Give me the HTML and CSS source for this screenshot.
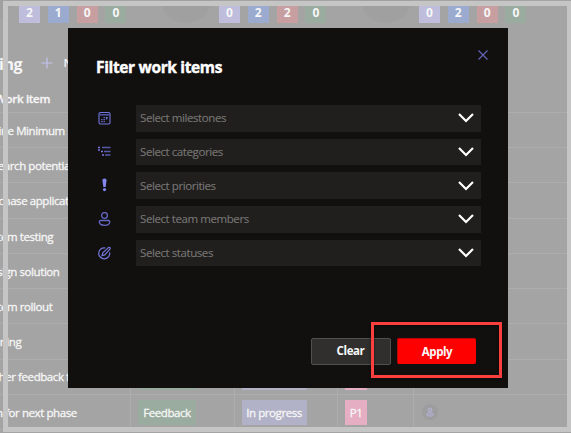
FILE: index.html
```html
<!DOCTYPE html>
<html lang="en">
<head>
<meta charset="utf-8">
<title>Filter work items</title>
<link rel="stylesheet" href="styles.css">
</head>
<body>
<div class="app">
  <div class="summary">
    <div class="group"><span class="ring">0%</span><div class="counts"><b class="c1">2</b><b class="c2">1</b><b class="c3">0</b><b class="c4">0</b></div></div>
    <div class="group"><span class="ring">0%</span><div class="counts"><b class="c1">0</b><b class="c2">2</b><b class="c3">2</b><b class="c4">0</b></div></div>
    <div class="group"><span class="ring">0%</span><div class="counts"><b class="c1">0</b><b class="c2">2</b><b class="c3">0</b><b class="c4">0</b></div></div>
  </div>
  <div class="toolbar">
    <h2><span>Planning</span></h2>
    <svg width="12" height="12" viewBox="0 0 12 12"><path d="M6 .5v11M.5 6h11" stroke="#c2c2ee" stroke-width="1.200" fill="none"/></svg>
    <span>New</span>
  </div>
  <div class="table">
    <div class="row head"><div><span>Work item</span></div></div>
    <div class="row"><div><span class="a">Define Minimum</span></div></div>
    <div class="row"><div><span class="b">Research potential</span></div></div>
    <div class="row"><div><span class="c">Purchase application</span></div></div>
    <div class="row"><div><span class="d">System testing</span></div></div>
    <div class="row"><div><span class="e">Design solution</span></div></div>
    <div class="row"><div><span class="f">System rollout</span></div></div>
    <div class="row"><div><span class="g">Training</span></div></div>
    <div class="row"><div><span class="h">Gather feedback from</span></div><div><i class="pill green">Feedback</i></div><div><i class="pill blue">In progress</i></div><div><i class="pill pink">P1</i></div><div></div></div>
    <div class="row"><div><span class="i">Plan for next phase</span></div><div><i class="pill green">Feedback</i></div><div><i class="pill blue">In progress</i></div><div><i class="pill pink">P1</i></div><div><svg class="avatar" width="16" height="16" viewBox="0 0 16 16"><circle cx="8" cy="8" r="8" fill="#9d9d9f"/><g fill="#a5a3b9" stroke="#b6b2cf"><circle cx="8" cy="6" r="2"/><rect x="4.8" y="9" width="6.4" height="3" rx="1.5"/></g></svg></div></div>
  </div>
</div>
<div class="frame"></div>
<div class="dialog">
  <header>
    <h1>Filter work items</h1>
    <svg class="close" width="10" height="10" viewBox="0 0 10 10"><path d="M.5.5l9 9M9.500.5l-9 9" stroke="#6264b4" stroke-width="1.200" fill="none"/></svg>
  </header>
  <div class="fields">
    <div class="field">
      <svg class="icon" width="14" height="14" viewBox="0 0 14 14"><rect x="1" y="1.500" width="11" height="11.500" rx="1.500" fill="none" stroke="#7376df" stroke-width="1.100"/><path d="M1.500 3.800h10" stroke="#5558a6" stroke-width="1.500"/><path d="M5.500 6.700h1.300M8 6.700h1.800M3.200 8.700h1.300M5.500 8.700h1.300M8.500 6v2.500M3.200 10.700h1.300M5.500 10.700h1.300" stroke="#6d70d0" stroke-width="1.300"/></svg>
      <div class="select"><span>Select milestones</span><svg width="16" height="10" viewBox="0 0 16 10"><path d="M1 1l7 7 7-7"/></svg></div>
    </div>
    <div class="field">
      <svg class="icon" width="14" height="14" viewBox="0 0 14 14"><path d="M0 3.500h2M0 6h2M3 7.500h2M4 11h2" stroke="#777ae2" stroke-width="1.300"/><path d="M4 3.500h8.500M6 7.500h6.500M7 11h5.500" stroke="#5659a8" stroke-width="1.500"/></svg>
      <div class="select"><span>Select categories</span><svg width="16" height="10" viewBox="0 0 16 10"><path d="M1 1l7 7 7-7"/></svg></div>
    </div>
    <div class="field">
      <svg class="icon" width="14" height="14" viewBox="0 0 14 14"><path d="M4.400 2Q4.400.5 6.500.5T8.600 2L7.700 9H5.300z" fill="#8487ef"/><circle cx="6.500" cy="11.600" r="1.600" fill="#7f83f0"/></svg>
      <div class="select"><span>Select priorities</span><svg width="16" height="10" viewBox="0 0 16 10"><path d="M1 1l7 7 7-7"/></svg></div>
    </div>
    <div class="field">
      <svg class="icon" width="14" height="14" viewBox="0 0 14 14"><g fill="none" stroke="#6568c4" stroke-width="1.300"><circle cx="6.500" cy="3.500" r="2.900"/><path d="M2.800 8.500h7.500Q11.800 8.500 11.800 9.800C11.800 12 9.800 13.300 6.500 13.300S1.300 12 1.300 9.800Q1.300 8.500 2.800 8.500z"/></g></svg>
      <div class="select"><span>Select team members</span><svg width="16" height="10" viewBox="0 0 16 10"><path d="M1 1l7 7 7-7"/></svg></div>
    </div>
    <div class="field">
      <svg class="icon" width="14" height="14" viewBox="0 0 14 14"><g fill="none" stroke="#7477dc" stroke-width="1.200"><path d="M7.300 2A5.500 5.500 0 1 0 11.600 6.300M4 9.700l.8-2.900 5.600-5.200q.8-.6 1.500 0t0 1.500L6.800 8.900z"/></g></svg>
      <div class="select"><span>Select statuses</span><svg width="16" height="10" viewBox="0 0 16 10"><path d="M1 1l7 7 7-7"/></svg></div>
    </div>
  </div>
  <footer><button class="clear">Clear</button><button class="apply">Apply</button></footer>
</div>
<div class="callout"></div>
</body>
</html>
```
FILE: styles.css
```css
* { box-sizing: border-box; }
body {
  margin: 0;
  width: 571px;
  height: 433px;
  overflow: hidden;
  position: relative;
  background: #a4a4a4;
  color: #f6f6f6;
  font: 11.5px/16px "Open Sans", "Noto Sans", sans-serif;
}
svg { display: block; flex: none; }
.app { height: 433px; overflow: hidden; }
.summary { display: flex; height: 49.500px; margin-left: -44px; }
.group { width: 200px; flex: none; position: relative; }
.ring {
  position: absolute;
  left: 4px;
  top: -29px;
  width: 52px;
  height: 52px;
  border-radius: 50%;
  background: #a0a0a0;
  text-align: center;
  font: 600 14px/48px "Open Sans", sans-serif;
}
.counts { display: flex; gap: 7.8px; padding: 3px 0 0 63px; }
.counts b {
  width: 21px;
  height: 19.500px;
  text-align: center;
  font-size: 12px;
  font-weight: 700;
  line-height: 20px;
}
.c1 { background: #bebddc; }
.c2 { background: #9aabcf; }
.c3 { background: #c79fa0; }
.c4 { background: #9aac9f; }
.toolbar { height: 27.500px; padding-bottom: 1.500px; display: flex; align-items: center; font-weight: 600; }
.toolbar h2 {
  width: 22px;
  margin: 2px 19px 0 0;
  display: flex;
  justify-content: flex-end;
  font-size: 16px;
  font-weight: 700;
  letter-spacing: -.5px;
  line-height: 22px;
}
.toolbar > span { margin-left: 10.500px; }
.row { display: flex; height: 35.220px; border-bottom: 1px solid #adadad; }
.row.head { height: 36px; }
.row > div { display: flex; align-items: center; padding: 1px 0 0 7px; }
.row > div:first-child { width: 130px; flex: none; padding: 1.500px 0 0; }
.row > div + div { width: 103.500px; border-left: 1px solid #adadad; }
.row > div:nth-child(4) { width: 76px; }
.row > div:nth-child(5) { flex: 1; }
.row span {
  white-space: nowrap;
  font-weight: 500;
  letter-spacing: -.42px;
  -webkit-text-stroke: .3px #f6f6f6;
}
.row.head span { font-weight: 600; margin: 7px 0 0 -5px; letter-spacing: -.3px; }
.row .a { margin-left: -19px; }
.row .b { margin-left: -20px; }
.row .c { margin-left: -19px; }
.row .d { margin-left: -19px; }
.row .e { margin-left: -17px; }
.row .f { margin-left: -19px; }
.row .g { margin-left: -19px; }
.row .h { margin-left: -19px; }
.row .i { margin-left: -19px; }
.pill {
  font-style: normal;
  font-weight: 500;
  height: 25px;
  line-height: 26px;
  text-align: center;
  letter-spacing: -.42px;
  white-space: nowrap;
  -webkit-text-stroke: .3px #f6f6f6;
}
.green { width: 58px; background: #9aac9f; }
.blue { width: 65px; background: #b1b1c7; }
.pink { width: 22px; background: #e6aec2; }
.avatar { margin-left: 1px; }
.frame {
  position: absolute;
  left: 3px;
  top: 1px;
  width: 568px;
  height: 431px;
  border: 5px solid #c5c5c5;
  border-right-width: 4px;
}
.dialog {
  position: absolute;
  left: 68px;
  top: 28px;
  width: 440px;
  height: 360px;
  background: #11100f;
}
.dialog header { display: flex; justify-content: space-between; height: 77px; padding: 22px 20px 0 28px; }
h1 {
  margin: 6px 0 0;
  font-size: 15.500px;
  line-height: 22px;
  font-weight: 700;
  color: #fff;
  letter-spacing: -.35px;
  white-space: nowrap;
  -webkit-text-stroke: .4px #fff;
}
.fields { display: flex; flex-direction: column; gap: 7.200px; padding: 0 27px 0 29.500px; }
.field { display: flex; align-items: center; height: 26.500px; }
.icon { margin-top: -1px; }
.select {
  margin-left: 24.500px;
  width: 345px;
  height: 26.500px;
  padding: 0 7px 0 4px;
  display: flex;
  align-items: center;
  justify-content: space-between;
  background: #201f1e;
  color: #797775;
}
.select span { letter-spacing: -.42px; -webkit-text-stroke: .1px #797775; }
.select path { fill: none; stroke: #fff; stroke-width: 2.2; }
.dialog footer { display: flex; justify-content: flex-end; gap: 6.500px; padding: 71.700px 32px 0 0; }
button { font: 700 11.500px/16px "Open Sans", sans-serif; letter-spacing: -.4px; color: #f8f8f8; border-radius: 2px; padding: 0; }
.clear { width: 80px; height: 27px; border: 1px solid #51504e; background: #302f2d; }
.apply { width: 79px; height: 26.500px; border: 1px solid #b80505; border-width: 1px 0 0 1px; background: #f00; }
.callout {
  position: absolute;
  left: 371px;
  top: 322px;
  width: 131px;
  height: 56px;
  border: 3px solid #fb3e3e;
  box-shadow: 0 1px 3px rgba(0, 0, 0, .5), inset 0 1px 3px rgba(0, 0, 0, .4);
}
```
